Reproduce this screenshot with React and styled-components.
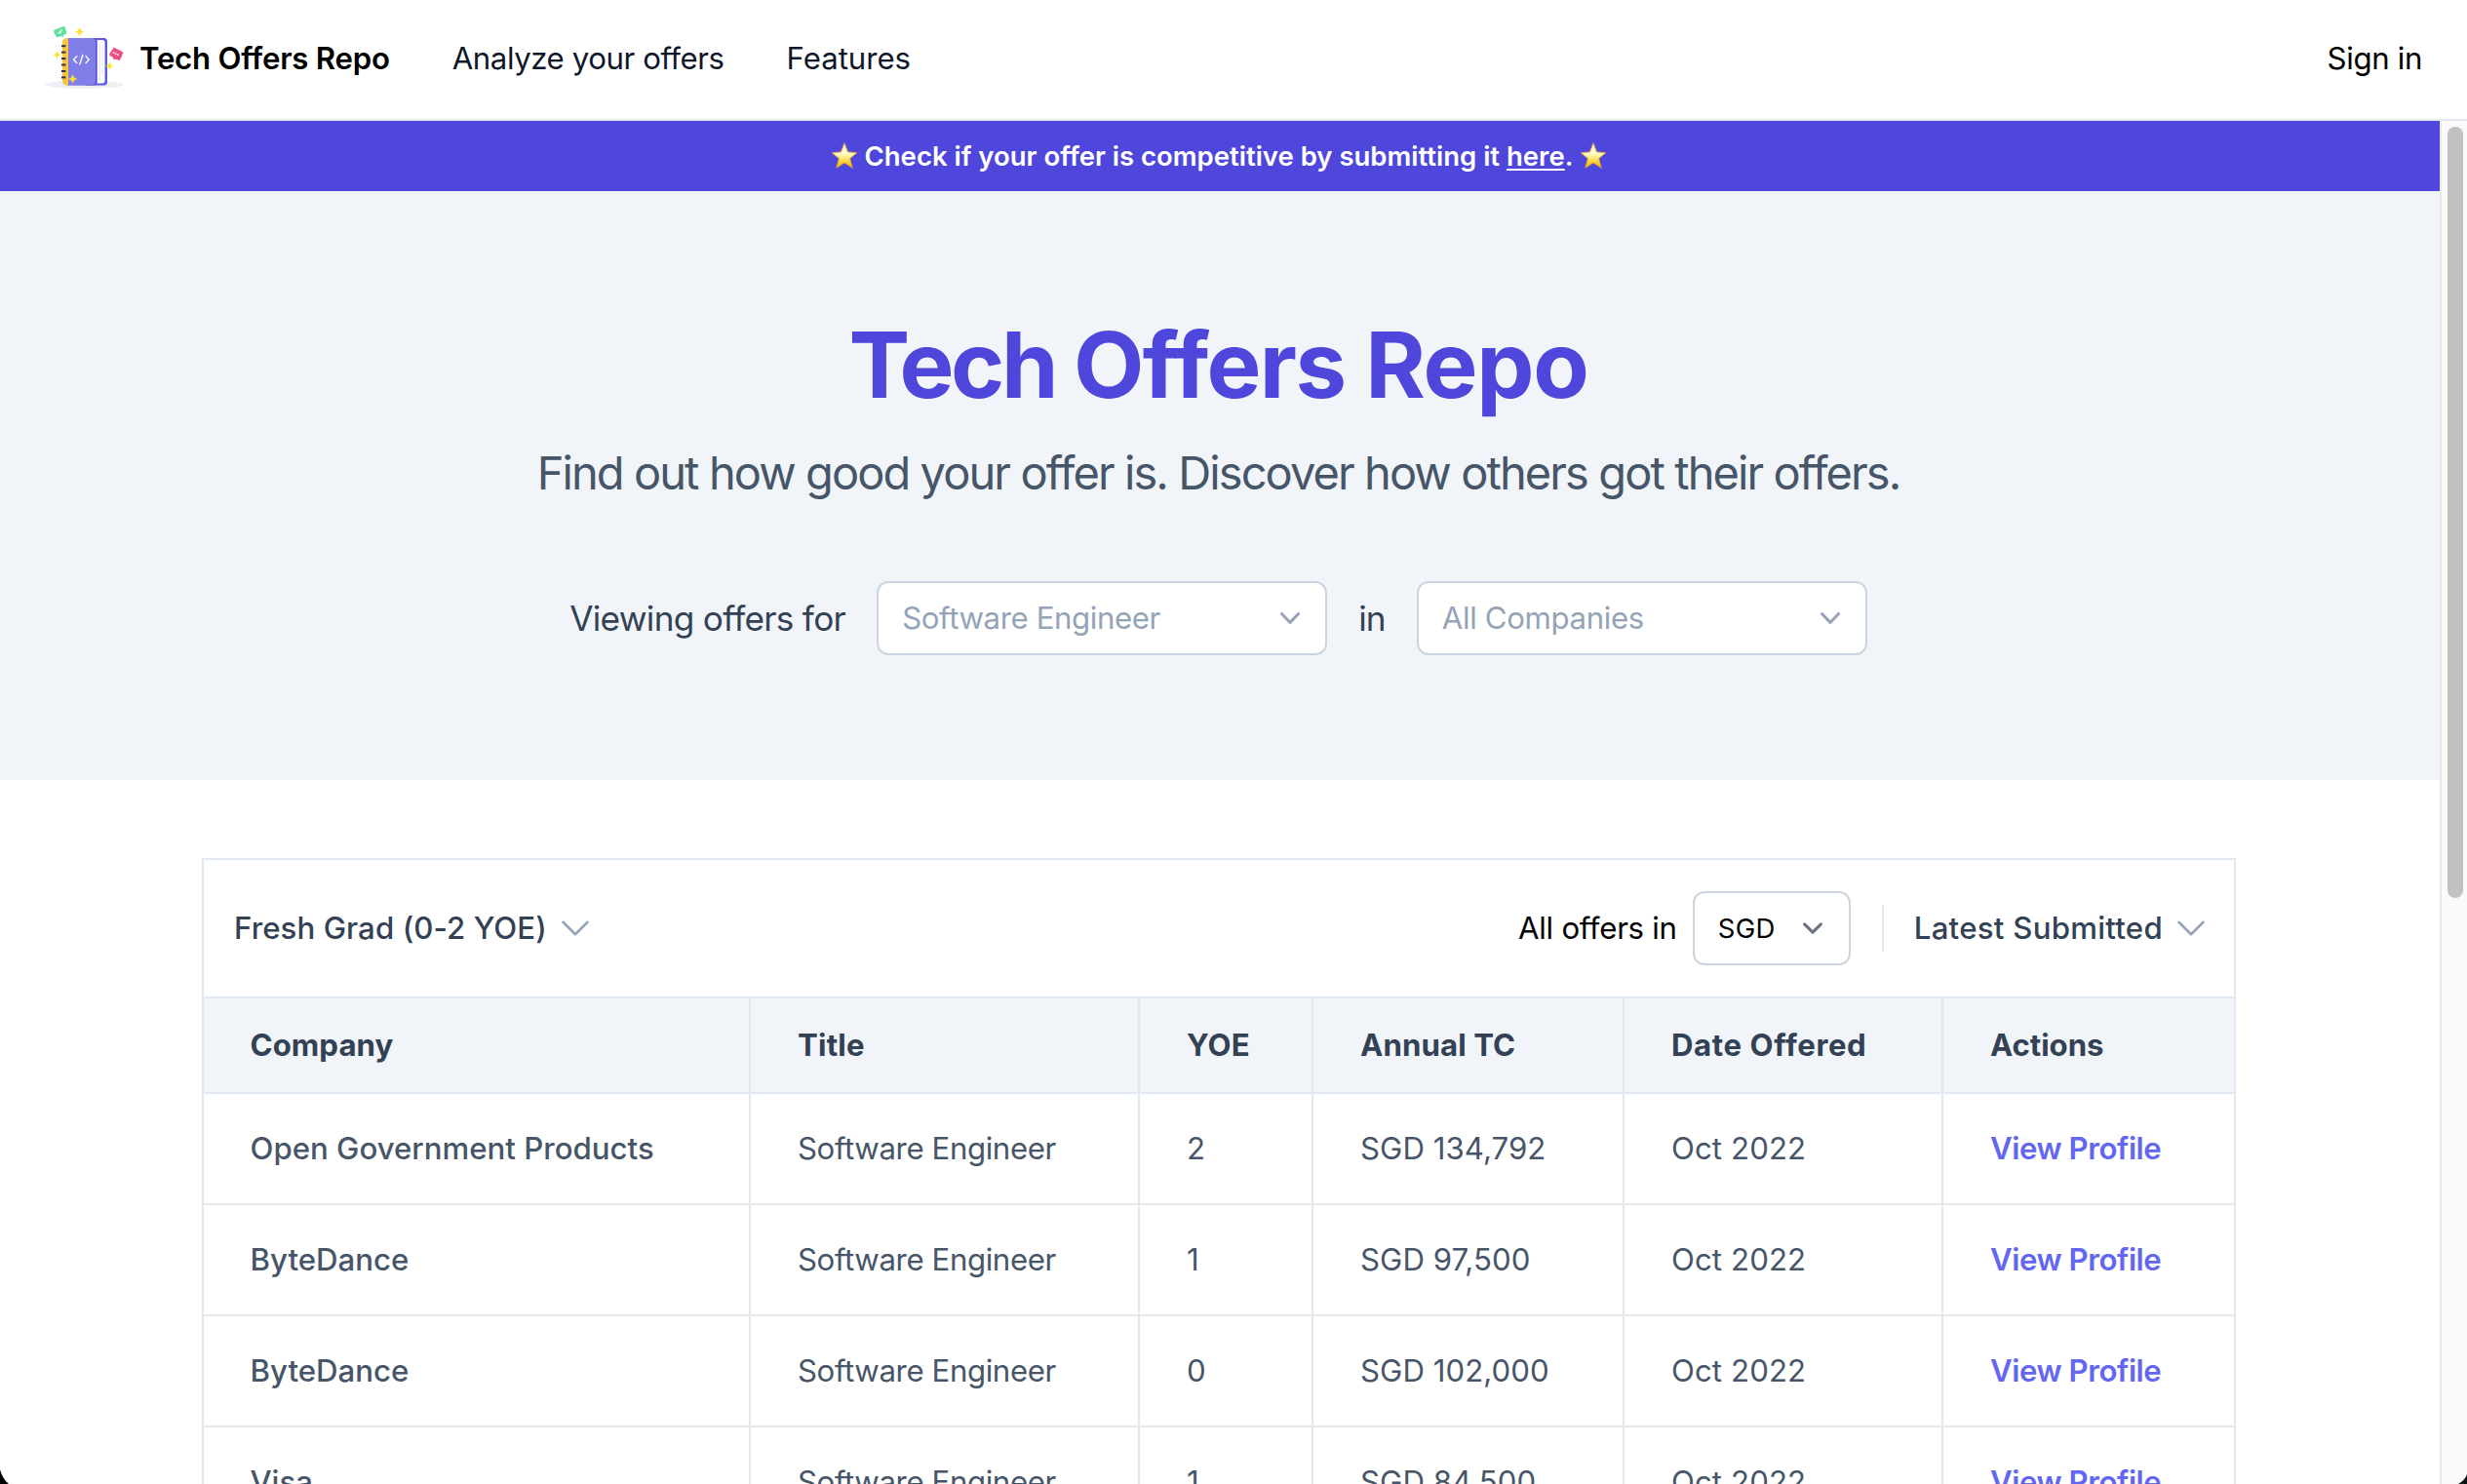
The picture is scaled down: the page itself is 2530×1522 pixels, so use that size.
import React from "react";
import styled, { createGlobalStyle } from "styled-components";

const GlobalStyle = createGlobalStyle`
  *, *::before, *::after { box-sizing: border-box; }
  html, body { margin: 0; padding: 0; background: #fff; }
  body {
    font-family: Inter, "Liberation Sans", sans-serif;
    font-size: 31.2px;
    line-height: 48px;
    color: #000;
    overflow: hidden;
  }
`;

const Page = styled.div`
  position: relative;
  display: flex;
  flex-direction: column;
  width: 2530px;
  height: 1522px;
  overflow: hidden;
  background: #fff;
`;

const Text = styled.span`
  white-space: pre;
  letter-spacing: ${(p) => p.$track || 0}px;
`;

/* Top navigation */

const Header = styled.header`
  display: flex;
  align-items: center;
  flex: none;
  height: 124px;
  padding: 0 46px 2px 40px;
  border-bottom: 2px solid #e2e8f0;
`;

const Brand = styled.a`
  display: flex;
  align-items: center;
  gap: 13px;
  font-weight: 600;
`;

const Nav = styled.nav`
  display: flex;
  flex: 1;
  gap: 64px;
  margin-left: 64px;
  color: #0f172a;
`;

/* Scrolling area */

const Viewport = styled.div`
  display: flex;
  flex: 1;
  min-height: 0;
`;

const Content = styled.main`
  flex: 1;
  min-width: 0;
  overflow: hidden;
`;

const ScrollTrack = styled.div`
  flex: none;
  width: 28px;
  padding: 6px 4px 0 6px;
  border-left: 2px solid #e8e8e8;
  background: #fafafa;
`;

const ScrollThumb = styled.div`
  width: 16px;
  height: 791px;
  border-radius: 8px;
  background: #c1c1c1;
`;

const Banner = styled.div`
  display: flex;
  align-items: center;
  justify-content: center;
  gap: 7px;
  height: 72px;
  padding-right: 2px;
  background: #4f46dc;
  color: #fff;
  font-size: 27.5px;
  font-weight: 600;
`;

const BannerLink = styled.a`
  text-decoration: underline;
  text-decoration-thickness: 2px;
  text-underline-offset: 3px;
`;

const Hero = styled.section`
  display: flex;
  flex-direction: column;
  align-items: center;
  height: 604px;
  padding: 130px 3px 0 0;
  background: #f1f5f9;
`;

const Title = styled.h1`
  margin: 0;
  font-size: 94px;
  line-height: 96px;
  font-weight: 700;
  color: #4f46dc;
  white-space: pre;
`;

const Subtitle = styled.p`
  margin: 35px 0 0;
  font-size: 47px;
  line-height: 56px;
  letter-spacing: -1.917px;
  white-space: nowrap;
  color: #475569;
`;

const Filters = styled.div`
  display: flex;
  align-items: center;
  gap: 32px;
  margin-top: 83px;
  font-size: 35.2px;
  color: #334155;
`;

const SelectBox = styled.button`
  display: flex;
  align-items: center;
  justify-content: space-between;
  width: ${(p) => p.$width}px;
  height: 76px;
  padding: 0 ${(p) => p.$right}px 0 24px;
  border: 2px solid #cbd5e1;
  border-radius: 12px;
  background: #fff;
  font: inherit;
  font-size: ${(p) => p.$size}px;
  color: ${(p) => p.$color};
`;

/* Offers table */

const Card = styled.section`
  width: 2086px;
  margin: 80px 0 0 207px;
  border: 2px solid #e2e8f0;
  border-bottom: 0;
`;

const Toolbar = styled.div`
  display: flex;
  align-items: center;
  justify-content: space-between;
  height: 142px;
  padding: 0 24px 0 31px;
  border-bottom: 2px solid #e2e8f0;
`;

const ToolbarGroup = styled.div`
  display: flex;
  align-items: center;
`;

const MenuButton = styled.button`
  display: flex;
  align-items: center;
  gap: 9px;
  padding: 0;
  border: 0;
  background: none;
  font: inherit;
  font-weight: 500;
  color: #334155;
`;

const CurrencyLabel = styled.span`
  margin-right: 16px;
`;

const Divider = styled.span`
  width: 2px;
  height: 48px;
  margin: 0 31px 0 32px;
  background: #e2e8f0;
`;

const Row = styled.div`
  display: grid;
  grid-template-columns: 559px 399px 178px 319px 327px 300px;
  height: ${(p) => (p.$head ? 98 : 114)}px;
  border-bottom: 2px solid ${(p) => (p.$head ? "#e2e8f0" : "#e5e7eb")};
  background: ${(p) => (p.$head ? "#f1f5f9" : "#fff")};
  color: ${(p) => (p.$head ? "#334155" : "#475569")};
  font-weight: ${(p) => (p.$head ? 700 : 400)};
`;

const Cell = styled.div`
  display: flex;
  align-items: center;
  padding: 0 0 0 48px;
  border-left: 2px solid #e2e8f0;
  font-weight: ${(p) => p.$weight || "inherit"};
  color: ${(p) => p.$color || "inherit"};

  &:first-child {
    padding-left: 47.5px;
    border-left: 0;
  }
`;

const Corner = styled.svg`
  position: absolute;
  bottom: 0;
  ${(p) => p.$side}: 0;
`;

const sparkle = (cx, cy, r) =>
  `M${cx} ${cy - r}Q${cx + r * 0.15} ${cy - r * 0.15} ${cx + r} ${cy}Q${cx + r * 0.15} ${cy + r * 0.15} ${cx} ${cy + r}Q${cx - r * 0.15} ${cy + r * 0.15} ${cx - r} ${cy}Q${cx - r * 0.15} ${cy - r * 0.15} ${cx} ${cy - r}Z`;

function Logo() {
  return (
    <svg width="90" height="80" viewBox="40 20 90 80" fill="none">
      <ellipse cx="86.5" cy="86.8" rx="40.5" ry="4" fill="#edeff4" />
      <path d="M88 39H106.5Q110 39 110 42.5V84Q110 87.5 106.5 87.5H88Z" fill="#5c59dc" />
      <path d="M98 41H105Q107.6 41 107.6 44V82.500Q107.600 85.500 105 85.500H98Z" fill="#fdfdff" />
      <path d="M102 44V83M105 49V76" stroke="#e3e4ee" strokeWidth="0.9" />
      <path d="M69 39H96Q99.700 39 99.700 43V83.500Q99.700 87.500 96 87.500H69Z" fill="#5451d4" />
      <path d="M69 39H94.500Q98 39 98 43V83.500Q98 87 94.500 87H69Z" fill="#807fea" />
      <path d="M70 39H68Q64 39.500 64 44V82.500Q64 87 68 87.500H70Z" fill="#f6c544" />
      {[47.2, 53.6, 60.1, 66.500, 73, 79.400].map((y) => (
        <path key={y} d={`M63 ${y}H67.400`} stroke="#33313d" strokeWidth="2" />
      ))}
      <path d="M79.200 57.300L75.500 61.200L79.200 65M87.600 57.300L91.300 61.200L87.600 65M85 55.700L81.700 66.500" stroke="#fff" strokeWidth="1.300" />
      <path d="M56 30.600L64.800 27.200Q66.200 26.800 66.700 28L68.300 33.200Q68.500 34.500 67.500 35L65.300 35.900L64.800 38.200L62.700 36.900L58.200 38.400L57.500 36.700L55.200 33Q54.700 31.300 56 30.600Z" fill="#63df9f" />
      <path d="M59.700 33.200L61.400 34L63 30.600" stroke="#fff" strokeWidth="1.300" />
      <path d="M116.300 49.300Q117 48.700 118 49.200L125.300 53Q126.500 53.700 126 54.900L123.300 61Q122.800 62.200 121.600 61.700L119.800 61L116.300 60.700L115.500 58.500L113 57.200Q111.700 56.500 112.300 55.300Z" fill="#ee4e83" />
      <path d="M115.800 53.600L121.800 56.600" stroke="#fff" strokeWidth="1.500" strokeDasharray="1.700 0.700" />
      <path
        d={[sparkle(81.600, 32.700, 4.200), sparkle(58.500, 56.200, 3.700), sparkle(112.300, 67.600, 3.700), sparkle(74.600, 81, 4.300)].join("")}
        fill="#fbe136"
        stroke="#fbe136"
        strokeWidth="0.5"
      />
    </svg>
  );
}

function Star({ id }) {
  return (
    <svg width="28" height="30" viewBox="0 0 28 30">
      <defs>
        <linearGradient id={id} x1="0" y1="0" x2="0" y2="1">
          <stop offset="0.05" stopColor="#fff6d8" />
          <stop offset="0.45" stopColor="#fffac0" />
          <stop offset="0.72" stopColor="#fbdc3c" />
          <stop offset="1" stopColor="#eda31c" />
        </linearGradient>
      </defs>
      <path
        d="M14 1.500L17.600 10.900L27 11.500L19.700 17.600L22.300 27.300L14 22L5.700 27.300L8.300 17.600L1 11.500L10.400 10.900Z"
        fill={`url(#${id})`}
        stroke="#d99a3a"
        strokeWidth="0.900"
        strokeLinejoin="round"
      />
    </svg>
  );
}

function SolidChevron() {
  return (
    <svg width="40" height="40" viewBox="0 0 20 20" fill="#94a3b8">
      <path
        fillRule="evenodd"
        d="M5.23 7.21a.75.75 0 011.06.02L10 11.168l3.71-3.938a.75.75 0 111.08 1.04l-4.25 4.5a.75.75 0 01-1.08 0l-4.25-4.5a.75.75 0 01.02-1.06z"
      />
    </svg>
  );
}

function NativeChevron() {
  return (
    <svg width="42" height="42" viewBox="0 0 20 20" fill="none">
      <path d="M6 8l4 4 4-4" stroke="#6b7280" strokeWidth="1.5" strokeLinecap="round" strokeLinejoin="round" />
    </svg>
  );
}

function OutlineChevron() {
  return (
    <svg width="40" height="40" viewBox="0 0 24 24" fill="none">
      <path d="M19.5 8.25l-7.5 7.5-7.5-7.5" stroke="#94a3b8" strokeWidth="1.5" strokeLinecap="round" strokeLinejoin="round" />
    </svg>
  );
}

const columns = [
  ["Company", 0.065],
  ["Title", 0.2],
  ["YOE", 0.1],
  ["Annual TC", 0.1],
  ["Date Offered", 0.58],
  ["Actions", -0.05],
];

const offers = [
  { company: "Open Government Products", yoe: "2", tc: "SGD 134,792" },
  { company: "ByteDance", yoe: "1", tc: "SGD 97,500" },
  { company: "ByteDance", yoe: "0", tc: "SGD 102,000" },
  { company: "Visa", yoe: "1", tc: "SGD 84,500" },
];

export default function App() {
  return (
    <Page>
      <GlobalStyle />
      <Header>
        <Brand>
          <Logo />
          <Text $track={-0.238}>Tech Offers Repo</Text>
        </Brand>
        <Nav>
          <Text $track={-0.431}>Analyze your offers</Text>
          <Text $track={-0.03}>Features</Text>
        </Nav>
        <Text $track={-0.34}>Sign in</Text>
      </Header>
      <Viewport>
        <Content>
          <Banner>
            <Star id="star-start" />
            <Text>
              Check if your offer is competitive by submitting it <BannerLink>here</BannerLink>.
            </Text>
            <Star id="star-end" />
          </Banner>
          <Hero>
            <Title>
              <Text $track={-3.4}>Tech </Text>
              <Text $track={-1.6}>Offers </Text>
              <Text $track={-1.3}>Repo</Text>
            </Title>
            <Subtitle>Find out how good your offer is. Discover how others got their offers.</Subtitle>
            <Filters>
              <Text $track={-0.7}>Viewing offers for</Text>
              <SelectBox $width={462} $right={16} $size={31.2} $color="#94a3b8">
                <Text $track={-0.388}>Software Engineer</Text>
                <SolidChevron />
              </SelectBox>
              <Text $track={-0.8}>in</Text>
              <SelectBox $width={462} $right={16} $size={31.2} $color="#94a3b8">
                <Text $track={-0.356}>All Companies</Text>
                <SolidChevron />
              </SelectBox>
            </Filters>
          </Hero>
          <Card>
            <Toolbar>
              <MenuButton>
                <Text $track={0.08}>Fresh Grad (0-2 YOE)</Text>
                <OutlineChevron />
              </MenuButton>
              <ToolbarGroup>
                <CurrencyLabel>
                  <Text $track={-0.272}>All offers in</Text>
                </CurrencyLabel>
                <SelectBox $width={162} $right={16} $size={27.5} $color="#000">
                  <Text $track={0.3}>SGD</Text>
                  <NativeChevron />
                </SelectBox>
                <Divider />
                <MenuButton>
                  <Text $track={0.26}>Latest Submitted</Text>
                  <OutlineChevron />
                </MenuButton>
              </ToolbarGroup>
            </Toolbar>
            <Row $head>
              {columns.map(([label, track]) => (
                <Cell key={label}>
                  <Text $track={track}>{label}</Text>
                </Cell>
              ))}
            </Row>
            {offers.map((offer, index) => (
              <Row key={index}>
                <Cell $weight={500}>
                  <Text>{offer.company}</Text>
                </Cell>
                <Cell>
                  <Text $track={-0.388}>Software Engineer</Text>
                </Cell>
                <Cell>{offer.yoe}</Cell>
                <Cell>
                  <Text $track={0.05}>{offer.tc}</Text>
                </Cell>
                <Cell>
                  <Text $track={0.1}>Oct 2022</Text>
                </Cell>
                <Cell $weight={600} $color="#6366f1">
                  <Text $track={-0.45}>View Profile</Text>
                </Cell>
              </Row>
            ))}
          </Card>
        </Content>
        <ScrollTrack>
          <ScrollThumb />
        </ScrollTrack>
      </Viewport>
      <Corner $side="left" width="9" height="15" viewBox="0 0 9 15">
        <path d="M0 0Q2 9 9 15H0Z" fill="#000" />
      </Corner>
      <Corner $side="right" width="9" height="10" viewBox="0 0 9 10">
        <path d="M9 0Q7 6 0 10H9Z" fill="#0b1216" />
      </Corner>
    </Page>
  );
}
